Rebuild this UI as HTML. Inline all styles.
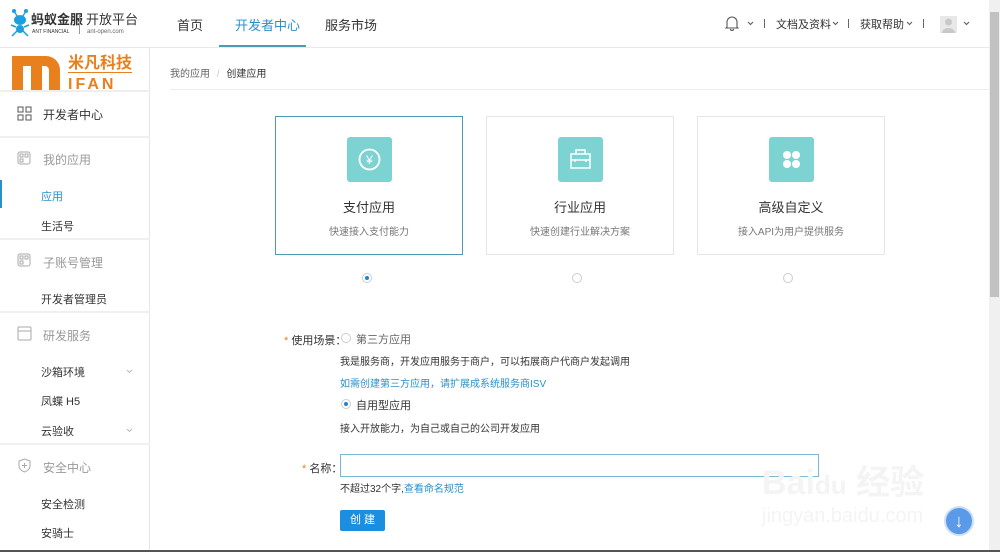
<!DOCTYPE html>
<html><head><meta charset="utf-8"><style>
*{margin:0;padding:0;box-sizing:border-box}
body{width:1000px;height:552px;overflow:hidden;background:#fff;font-family:"Liberation Sans","Noto Sans CJK SC",sans-serif;font-size:12px;color:#333;position:relative}
.a{position:absolute;white-space:nowrap}
.hdr{position:absolute;left:0;top:0;width:989px;height:48px;border-bottom:1px solid #e8e8e8;background:#fff}
.side{position:absolute;left:0;top:48px;width:150px;height:502px;border-right:1px solid #e6e6e6;background:#fff}
.sep{position:absolute;left:0;width:150px;height:2px;background:#f0f0f0}
.card{position:absolute;top:116px;width:188px;height:139px;border:1px solid #e6e6e6;background:#fff;text-align:center}
.card.on{border-color:#4d9ab5}
.ic{position:absolute;left:71px;top:20px;width:45px;height:45px;border-radius:3px;background:#7dd3d2}
.ct{position:absolute;left:0;width:100%;top:80px;font-size:13px;color:#333}
.cs{position:absolute;left:0;width:100%;top:106px;font-size:10px;color:#777}
.rad{position:absolute;width:10px;height:10px;border-radius:50%;border:1px solid #ccc;background:#fff}
.rad.on::after{content:"";position:absolute;left:2px;top:2px;width:4px;height:4px;border-radius:50%;background:#1a84d8}
.si{position:absolute;left:41px;font-size:11px;color:#333}
.sh{position:absolute;left:43px;font-size:12px;color:#999}
.chev{position:absolute}
</style></head><body>
<div class="hdr">
 <svg class="a" style="left:9px;top:8px" width="22" height="30" viewBox="0 0 22 30"><circle cx="5" cy="3" r="2" fill="#1aa0e0"/><circle cx="17" cy="3" r="2" fill="#1aa0e0"/><path d="M5 3L8 8M17 3L14 8" stroke="#1aa0e0" stroke-width="1.3"/><ellipse cx="11" cy="12" rx="6" ry="5" fill="#1aa0e0"/><ellipse cx="11" cy="21" rx="4" ry="4" fill="#1aa0e0"/><path d="M2 17L7 19M20 17L15 19M3 28L8 23M19 28L14 23" stroke="#1aa0e0" stroke-width="1.5"/></svg>
 <svg class="a" style="left:30px;top:10px" width="110" height="26" viewBox="0 0 110 26">
  <text x="1" y="14" font-size="13" font-weight="bold" fill="#333" font-family="Noto Sans CJK SC,sans-serif">蚂蚁金服</text>
  <text x="2" y="23" font-size="5" fill="#333" font-family="Liberation Sans,sans-serif">ANT FINANCIAL</text>
  <rect x="49" y="4" width="1" height="20" fill="#999"/>
  <text x="56" y="14" font-size="13" fill="#333" font-family="Noto Sans CJK SC,sans-serif">开放平台</text>
  <text x="57" y="23" font-size="6" fill="#666" font-family="Liberation Sans,sans-serif">ant-open.com</text>
 </svg>
 <div class="a" style="left:177px;top:15px;font-size:13px">首页</div>
 <div class="a" style="left:235px;top:15px;font-size:13px;color:#2a90c9">开发者中心</div>
 <div class="a" style="left:219px;top:45px;width:87px;height:2px;background:#4d9ab5"></div>
 <div class="a" style="left:325px;top:15px;font-size:13px">服务市场</div>
 <svg class="a" style="left:725px;top:15px" width="14" height="16" viewBox="0 0 14 16"><path d="M2 12V7a5 5 0 0 1 10 0v5l1 1H1z M5.5 14a1.5 1.5 0 0 0 3 0" fill="none" stroke="#555" stroke-width="1.1"/></svg>
 <svg class="chev" style="left:747px;top:21px" width="7" height="5" viewBox="0 0 7 5"><path d="M1 1L3.5 3.5L6 1" fill="none" stroke="#555" stroke-width="1"/></svg>
 <div class="a" style="left:764px;top:19px;width:1px;height:9px;background:#666"></div>
 <div class="a" style="left:776px;top:16px;font-size:11px">文档及资料</div>
 <svg class="chev" style="left:832px;top:21px" width="7" height="5" viewBox="0 0 7 5"><path d="M1 1L3.5 3.5L6 1" fill="none" stroke="#555" stroke-width="1"/></svg>
 <div class="a" style="left:848px;top:19px;width:1px;height:9px;background:#666"></div>
 <div class="a" style="left:860px;top:16px;font-size:11px">获取帮助</div>
 <svg class="chev" style="left:906px;top:21px" width="7" height="5" viewBox="0 0 7 5"><path d="M1 1L3.5 3.5L6 1" fill="none" stroke="#555" stroke-width="1"/></svg>
 <div class="a" style="left:923px;top:19px;width:1px;height:9px;background:#666"></div>
 <div class="a" style="left:940px;top:16px;width:17px;height:17px;background:#e8e8e8"><svg width="17" height="17" viewBox="0 0 17 17"><circle cx="8.5" cy="6" r="3.5" fill="#c8c8c8"/><path d="M2 17a6.5 5 0 0 1 13 0z" fill="#c8c8c8"/></svg></div>
 <svg class="chev" style="left:963px;top:21px" width="7" height="5" viewBox="0 0 7 5"><path d="M1 1L3.5 3.5L6 1" fill="none" stroke="#555" stroke-width="1"/></svg>
</div>
<div class="side">
 <svg class="a" style="left:12px;top:4px" width="122" height="38" viewBox="0 0 122 38"><path d="M0 4H34a14 14 0 0 1 14 14V38H37V18a4 4 0 0 0-4-4H30V38H19V14H11V38H0z" fill="#e8801e"/><text x="56" y="16" font-size="16" font-weight="bold" fill="#e8801e" font-family="Noto Sans CJK SC,sans-serif">米凡科技</text><rect x="56" y="20" width="64" height="1" fill="#e8801e"/><text x="56" y="37" font-size="16" font-weight="bold" fill="#e8801e" letter-spacing="3" font-family="Liberation Sans,sans-serif">IFAN</text></svg>
 <div class="sep" style="top:42px;background:#eee"></div>
 <svg class="a" style="left:17px;top:58px" width="15" height="15" viewBox="0 0 15 15" fill="none" stroke="#555"><rect x="1" y="1" width="5" height="5"/><rect x="9" y="1" width="5" height="5"/><rect x="1" y="9" width="5" height="5"/><rect x="9" y="9" width="5" height="5"/></svg>
 <div class="a" style="left:43px;top:58px;font-size:12px">开发者中心</div>
 <div class="sep" style="top:88px"></div>
 <svg class="a" style="left:17px;top:103px" width="14" height="14" viewBox="0 0 14 14" fill="none" stroke="#aaa"><rect x="1" y="1" width="12" height="12" rx="2"/><rect x="3" y="3" width="3" height="3"/><rect x="8" y="3" width="3" height="3"/><rect x="3" y="8" width="3" height="3"/></svg>
 <div class="sh" style="top:103px">我的应用</div>
 <div class="a" style="left:0;top:132px;width:2px;height:28px;background:#2a90c9"></div>
 <div class="si" style="top:140px;color:#2a90c9">应用</div>
 <div class="si" style="top:170px">生活号</div>
 <div class="sep" style="top:190px"></div>
 <svg class="a" style="left:17px;top:205px" width="14" height="14" viewBox="0 0 14 14" fill="none" stroke="#aaa"><rect x="1" y="1" width="12" height="12" rx="2"/><rect x="3" y="3" width="3" height="3"/><rect x="8" y="3" width="3" height="3"/><rect x="3" y="8" width="3" height="3"/></svg>
 <div class="sh" style="top:206px">子账号管理</div>
 <div class="si" style="top:243px">开发者管理员</div>
 <div class="sep" style="top:263px"></div>
 <svg class="a" style="left:17px;top:278px" width="15" height="15" viewBox="0 0 15 15" fill="none" stroke="#aaa"><rect x="1" y="1" width="13" height="13" rx="1"/><path d="M1 5H14"/></svg>
 <div class="sh" style="top:279px">研发服务</div>
 <div class="si" style="top:316px">沙箱环境</div><svg class="chev" style="left:126px;top:321px" width="7" height="5" viewBox="0 0 7 5"><path d="M1 1L3.5 3.5L6 1" fill="none" stroke="#bbb"/></svg>
 <div class="si" style="top:345px">凤蝶 H5</div>
 <div class="si" style="top:375px">云验收</div><svg class="chev" style="left:126px;top:380px" width="7" height="5" viewBox="0 0 7 5"><path d="M1 1L3.5 3.5L6 1" fill="none" stroke="#bbb"/></svg>
 <div class="sep" style="top:395px"></div>
 <svg class="a" style="left:18px;top:410px" width="13" height="15" viewBox="0 0 13 15" fill="none" stroke="#aaa"><path d="M6.5 1L12 3V8C12 11 9 13 6.5 14C4 13 1 11 1 8V3Z M6.5 5V10M4 7.5H9"/></svg>
 <div class="sh" style="top:411px">安全中心</div>
 <div class="si" style="top:448px">安全检测</div>
 <div class="si" style="top:477px">安骑士</div>
</div>
<div class="a" style="left:170px;top:65px;font-size:10px;color:#666">我的应用 <span style="color:#ccc;margin:0 4px">/</span> <span style="color:#333">创建应用</span></div>
<div class="a" style="left:170px;top:89px;width:819px;height:1px;background:#eee"></div>

<div class="card on" style="left:275px"><div class="ic"><svg width="45" height="45" viewBox="0 0 45 45"><circle cx="22.5" cy="22.5" r="10" fill="none" stroke="#fff" stroke-width="1.8"/><text x="22.5" y="27" text-anchor="middle" fill="#fff" font-size="12">¥</text></svg></div><div class="ct">支付应用</div><div class="cs">快速接入支付能力</div></div>
<div class="card" style="left:486px"><div class="ic"><svg width="45" height="45" viewBox="0 0 45 45" fill="none" stroke="#fff" stroke-width="1.5"><rect x="13" y="17" width="19" height="14"/><path d="M18 17V13H27V17M13 23H32M17 22V25M28 22V25"/></svg></div><div class="ct">行业应用</div><div class="cs">快速创建行业解决方案</div></div>
<div class="card" style="left:697px"><div class="ic"><svg width="45" height="45" viewBox="0 0 45 45" fill="#fff"><rect x="14" y="14" width="8" height="8" rx="4"/><rect x="23" y="14" width="8" height="8" rx="4"/><rect x="14" y="23" width="8" height="8" rx="4"/><rect x="23" y="23" width="8" height="8" rx="4"/></svg></div><div class="ct">高级自定义</div><div class="cs">接入API为用户提供服务</div></div>
<div class="rad on" style="left:362px;top:273px"></div>
<div class="rad" style="left:572px;top:273px"></div>
<div class="rad" style="left:783px;top:273px"></div>

<div class="a" style="left:284px;top:332px;font-size:11px"><span style="color:#e8801e">* </span>使用场景：</div>
<div class="rad" style="left:341px;top:333px"></div>
<div class="a" style="left:356px;top:331px;font-size:11px;color:#666">第三方应用</div>
<div class="a" style="left:340px;top:353px;font-size:10px">我是服务商，开发应用服务于商户，可以拓展商户代商户发起调用</div>
<div class="a" style="left:340px;top:375px;font-size:10px;color:#2a90c9">如需创建第三方应用，请扩展成系统服务商ISV</div>
<div class="rad on" style="left:341px;top:399px"></div>
<div class="a" style="left:356px;top:397px;font-size:11px">自用型应用</div>
<div class="a" style="left:340px;top:420px;font-size:10px">接入开放能力，为自己或自己的公司开发应用</div>
<div class="a" style="left:302px;top:460px;font-size:11px"><span style="color:#e8801e">* </span>名称：</div>
<div class="a" style="left:340px;top:454px;width:479px;height:23px;border:1px solid #7ab8d8"></div>
<div class="a" style="left:340px;top:480px;font-size:10px">不超过32个字,<span style="color:#2a90c9">查看命名规范</span></div>
<div class="a" style="left:340px;top:510px;width:45px;height:21px;background:#1a8fe0;border-radius:2px;color:#fff;font-size:11px;text-align:center;line-height:21px">创 建</div>

<div class="a" style="left:762px;top:455px;font-size:34px;color:#f4f4f4;font-weight:bold">Bai<span style="font-size:26px">du</span> 经验</div>
<div class="a" style="left:762px;top:505px;font-size:20px;color:#f4f4f4">jingyan.baidu.com</div>
<div class="a" style="left:944px;top:506px;width:30px;height:30px;border-radius:50%;background:#5b9ae8;border:2px solid #cfe0f5;color:#fff;text-align:center;line-height:26px;font-size:18px;font-weight:bold">↓</div>

<div class="a" style="left:989px;top:0;width:11px;height:550px;background:#f0f0f0"></div>
<div class="a" style="left:990px;top:12px;width:9px;height:285px;background:#c1c1c1"></div>
<div class="a" style="left:0;top:550px;width:1000px;height:2px;background:#555"></div>
</body></html>
